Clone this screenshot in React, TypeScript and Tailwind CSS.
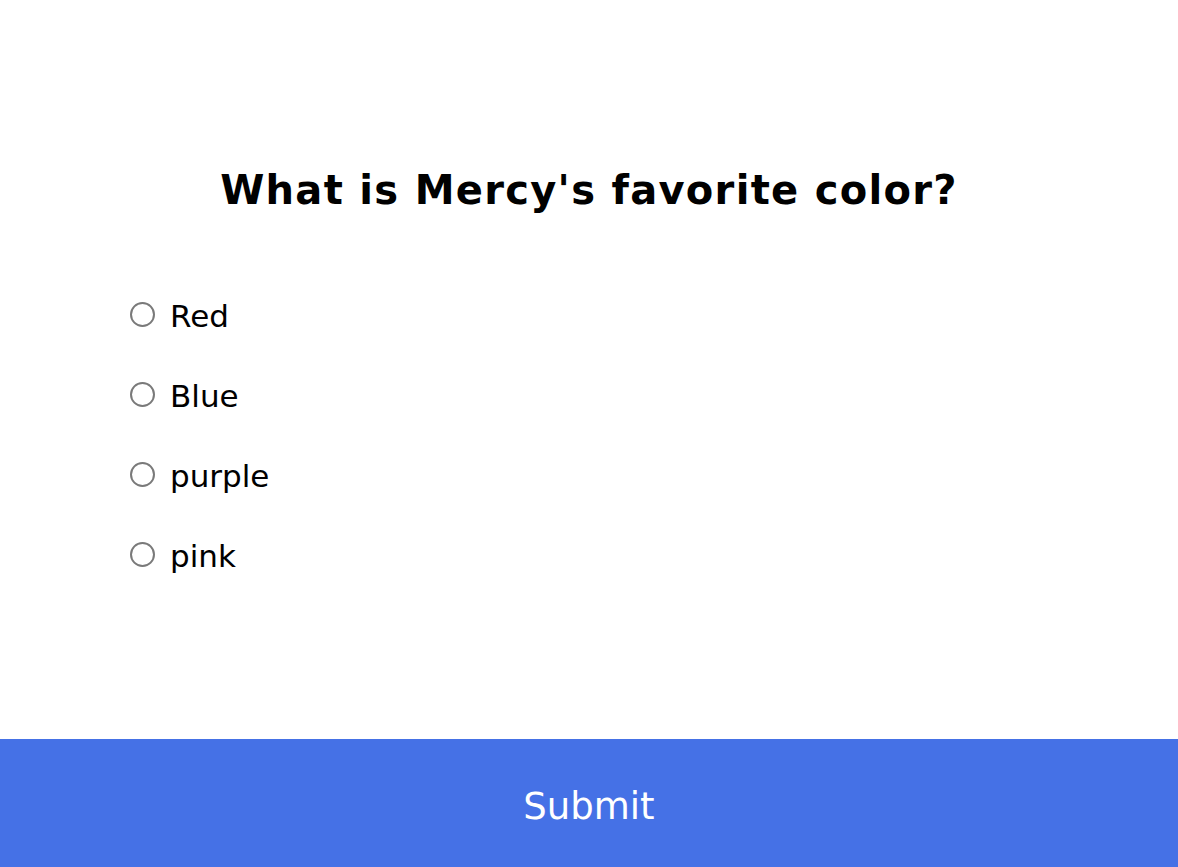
export default function App() {
  const opts = ["Red", "Blue", "purple", "pink"];
  return (
    <div className="w-full h-[867px] flex flex-col bg-white text-black" style={{ fontFamily: "'DejaVu Sans', Inter, sans-serif" }}>
      <div className="flex-1">
        <h2 className="mt-[160px] text-center text-[40px] leading-[60px] font-semibold m-0 tracking-[1.3px]">What is Mercy's favorite color?</h2>
        <ul className="mt-[54px] pl-[130px] list-none">
          {opts.map((o) => (
            <li key={o} className="h-[80px] flex items-center">
              <label className="flex items-center cursor-pointer">
                <input type="radio" name="answer" className="appearance-none w-[25px] h-[25px] rounded-full border-2 border-[#7a7a7a] bg-white m-0" />
                <span className="ml-[15px] text-[31px] leading-[40px] pt-[4px]">{o}</span>
              </label>
            </li>
          ))}
        </ul>
      </div>
      <button className="h-[128px] w-full bg-[#4571e6] text-white text-[37px] font-normal pt-[8px]">Submit</button>
    </div>
  );
}
